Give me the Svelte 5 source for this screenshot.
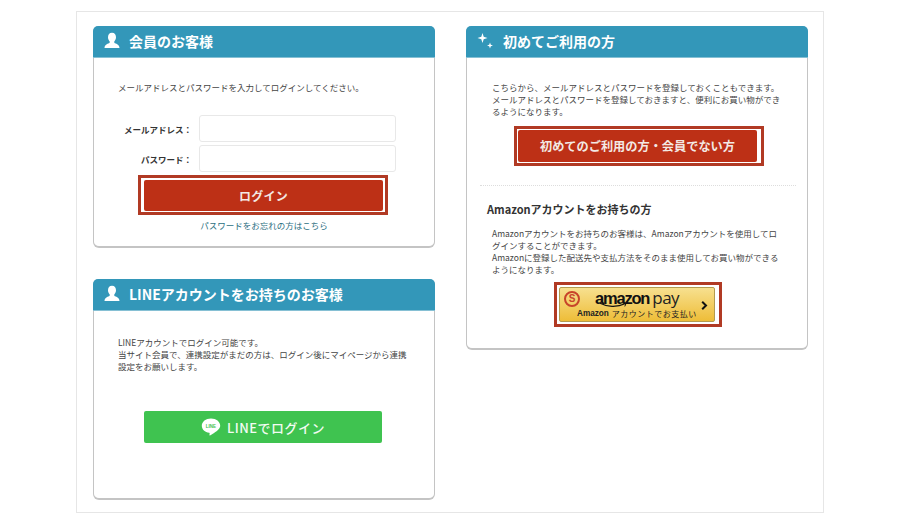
<script>
  const userPath = "M8 .8C5.300.8 4 2.900 4 5.300c0 1.700.7 3.200 1.700 4.100.2.900 0 1.500-.7 1.800-1.900.9-4.300 1.200-4.500 4.800h15c-.2-3.600-2.600-3.900-4.500-4.800-.7-.3-.9-.9-.7-1.800 1-.9 1.700-2.400 1.700-4.100C12 2.900 10.700.8 8 .8z";
</script>

<div class="frame">
  <div class="col">
    <section class="card login">
      <h2>
        <svg class="ico" viewBox="0 0 16 17"><path d={userPath} fill="#fff"/></svg>
        会員のお客様
      </h2>
      <div class="body">
        <p class="intro">メールアドレスとパスワードを入力してログインしてください。</p>
        <div class="form">
          <div class="row"><span class="lbl">メールアドレス：</span><div class="input"></div></div>
          <div class="row"><span class="lbl">パスワード：</span><div class="input"></div></div>
        </div>
        <div class="btnwrap"><div class="btn-frame big"><div class="btn">ログイン</div></div></div>
        <div class="link">パスワードをお忘れの方はこちら</div>
      </div>
    </section>

    <section class="card line">
      <h2>
        <svg class="ico" viewBox="0 0 16 17"><path d={userPath} fill="#fff"/></svg>
        LINEアカウントをお持ちのお客様
      </h2>
      <div class="body">
        <p class="intro">LINEアカウントでログイン可能です。<br>当サイト会員で、連携設定がまだの方は、ログイン後にマイページから連携<br>設定をお願いします。</p>
        <div class="linebtn">
          <svg class="lineico" viewBox="0 0 20 20">
            <path d="M10 1.500C4.800 1.500 .8 4.700.8 8.700c0 3.600 3.100 6.500 7.400 7.100.5.100.5.500.4 1l-.2 1.200c0 .4.300.6.700.4 1.500-.8 6.300-3.500 8.500-6.100 1-1.200 1.600-2.400 1.600-3.600 0-4-4-7.200-9.200-7.200z" fill="#fff"/>
            <text x="10" y="10.600" text-anchor="middle" class="linetxt">LINE</text>
          </svg>
          <span>LINEでログイン</span>
        </div>
      </div>
    </section>
  </div>

  <div class="col">
    <section class="card first">
      <h2>
        <svg class="ico" viewBox="0 0 18 18">
          <path d="M5.500 1l1.200 3.800L10.500 6 6.700 7.200 5.500 11 4.300 7.200.5 6l3.800-1.200z" fill="#fff"/>
          <path d="M13 10.500l.8 2.200 2.200.8-2.200.8-.8 2.200-.8-2.200-2.200-.8 2.200-.8z" fill="#fff"/>
        </svg>
        初めてご利用の方
      </h2>
      <div class="body">
        <p class="intro">こちらから、メールアドレスとパスワードを登録しておくこともできます。<br>メールアドレスとパスワードを登録しておきますと、便利にお買い物ができ<br>るようになります。</p>
        <div class="btnwrap"><div class="btn-frame reg"><div class="btn">初めてのご利用の方・会員でない方</div></div></div>
        <div class="dots"></div>
        <h3>Amazonアカウントをお持ちの方</h3>
        <p class="intro amz">Amazonアカウントをお持ちのお客様は、Amazonアカウントを使用してロ<br>グインすることができます。<br>Amazonに登録した配送先や支払方法をそのまま使用してお買い物ができる<br>ようになります。</p>
        <div class="btnwrap">
          <div class="amzframe">
            <div class="amzbtn">
              <span class="s">S</span>
              <div class="amzmain">
                <div class="amzlogo">
                  <span class="amzword">amazon</span><span class="pay">pay</span>
                  <svg class="smile" viewBox="0 0 28 6"><path d="M.5 1C8 5 18 5.500 26 1.800" fill="none" stroke="#111" stroke-width="1.200"/><path d="M23.500 .8l3.500.6-1.200 3" fill="none" stroke="#111" stroke-width="1"/></svg>
                </div>
                <div class="amzsub"><b>Amazon</b><span>アカウントでお支払い</span></div>
              </div>
              <svg class="chev" viewBox="0 0 7 9"><path d="M1.200 .8l3.800 3.700-3.800 3.700" fill="none" stroke="#111" stroke-width="2"/></svg>
            </div>
          </div>
        </div>
      </div>
    </section>
  </div>
</div>

<style>
  :global(body) {
    margin: 0;
    background: #fff;
    font-family: "Noto Sans CJK JP", "Noto Sans", sans-serif;
    color: #333;
  }
  .frame {
    box-sizing: border-box;
    width: 748px;
    height: 502px;
    margin: 11px 0 0 76px;
    border: 1px solid #e6e6e6;
    padding: 14px 15px 0 16px;
    display: flex;
    gap: 31px;
  }
  .col {
    width: 342px;
    display: flex;
    flex-direction: column;
    gap: 31px;
  }
  .card {
    box-sizing: border-box;
    border: 1px solid #c4c4c4;
    border-top: 0;
    border-bottom-width: 2px;
    border-radius: 6px;
    background: #fff;
  }
  .login { height: 222px; }
  .line { height: 221px; }
  .first { height: 324px; }
  h2 {
    margin: 0 -1px;
    height: 32px;
    box-sizing: border-box;
    background: #3397b9;
    border-bottom: 1px solid #86c0d4;
    border-radius: 5px 5px 0 0;
    color: #fff;
    font-size: 14px;
    font-weight: 700;
    line-height: 30px;
    display: flex;
    align-items: center;
    padding: 0 0 2px 11px;
    white-space: nowrap;
  }
  .ico {
    width: 16px;
    height: 17px;
    margin-right: 9px;
    flex: none;
  }
  .first .ico { width: 18px; height: 18px; margin-right: 8px; }
  .intro {
    margin: 0;
    font-size: 8.5px;
    line-height: 12px;
    color: #444;
    white-space: nowrap;
  }
  .login .intro { padding: 23px 0 0 24px; }
  .form {
    margin-top: 22px;
    display: flex;
    flex-direction: column;
    gap: 3px;
  }
  .row {
    display: flex;
    align-items: center;
    height: 27px;
  }
  .lbl {
    width: 105px;
    text-align: right;
    font-size: 8.5px;
    font-weight: 700;
    color: #333;
    flex: none;
    padding-right: 7px;
    box-sizing: border-box;
  }
  .input {
    width: 197px;
    height: 27px;
    box-sizing: border-box;
    border: 1px solid #e8e8e8;
    border-radius: 3px;
    background: #fff;
  }
  .btnwrap { display: flex; justify-content: center; }
  .btn-frame {
    box-sizing: border-box;
    border: 3px solid #b13a24;
    background: #fff;
  }
  .big { width: 250px; height: 40px; margin: 3px 2px 0 0; padding: 2px 2px 1px 3px; }
  .btn {
    height: 100%;
    background: #bd3016;
    border-radius: 2px;
    color: #f3e9e4;
    font-weight: 700;
    display: flex;
    align-items: center;
    justify-content: center;
    white-space: nowrap;
  }
  .big .btn { font-size: 12px; letter-spacing: .3px; }
  .link {
    text-align: center;
    font-size: 8.5px;
    line-height: 12px;
    margin-top: 4px;
    color: #2d6f82;
  }
  .line .intro { padding: 25px 0 0 24px; }
  .linebtn {
    width: 238px;
    height: 32px;
    margin: 39px 0 0 50px;
    background: #3fc350;
    border-radius: 2px;
    color: #f2fbf3;
    display: flex;
    align-items: center;
    justify-content: center;
    gap: 6px;
    font-size: 13px;
    font-weight: 500;
    letter-spacing: .5px;
  }
  .lineico { width: 20px; height: 20px; flex: none; }
  .linetxt { font: 700 4.500px "Liberation Sans", sans-serif; fill: #3fc350; letter-spacing: 0; }
  .first .intro { padding: 23px 0 0 25px; }
  .reg { width: 250px; height: 40px; margin: 9px 0 0 4px; padding: 1px 4px 1px 1px; }
  .reg .btn { font-size: 12.200px; }
  .dots {
    margin: 19px 11px 0 13px;
    border-top: 1px dotted #ddd;
  }
  h3 {
    margin: 15px 0 0 20px;
    font-size: 11px;
    line-height: 16px;
    font-weight: 700;
    color: #333;
    white-space: nowrap;
  }
  .first .intro.amz { padding: 10px 0 0 25px; }
  .amzframe {
    box-sizing: border-box;
    width: 168px;
    height: 45px;
    margin: 7px 0 0 2px;
    border: 3px solid #b13a24;
    padding: 2px 4px 2px 2px;
    background: #fff;
  }
  .amzbtn {
    height: 100%;
    box-sizing: border-box;
    border: 1px solid #b39b4e;
    border-radius: 2px;
    background: linear-gradient(#f7e08f, #eebd38);
    position: relative;
    overflow: hidden;
  }
  .s {
    width: 16px;
    height: 16px;
    box-sizing: border-box;
    border: 2px solid #c8442a;
    border-radius: 50%;
    color: #c8442a;
    font: 700 10px/12px "Liberation Sans", sans-serif;
    text-align: center;
    position: absolute;
    left: 4px;
    top: 3px;
  }
  .amzmain {
    display: flex;
    flex-direction: column;
    padding-left: 17px;
  }
  .amzlogo {
    position: relative;
    height: 21px;
    line-height: 18px;
    white-space: nowrap;
    color: #111;
    padding-left: 18px;
  }
  .amzword { font: 700 16.500px/18px "Liberation Sans", sans-serif; letter-spacing: -1.200px; }
  .pay { font: 400 17px/18px "Open Sans", sans-serif; margin-left: 3px; color: #222; letter-spacing: -.5px; }
  .smile { position: absolute; left: 22px; top: 14px; width: 28px; height: 6px; }
  .amzsub { display: flex; gap: 3px; font-size: 8px; line-height: 10px; color: #222; white-space: nowrap; }
  .amzsub b { font: 700 8.200px/10px "Liberation Sans", sans-serif; }
  .amzsub span { letter-spacing: .5px; }
  .chev { width: 7px; height: 9px; position: absolute; right: 6px; top: 13px; }
</style>
